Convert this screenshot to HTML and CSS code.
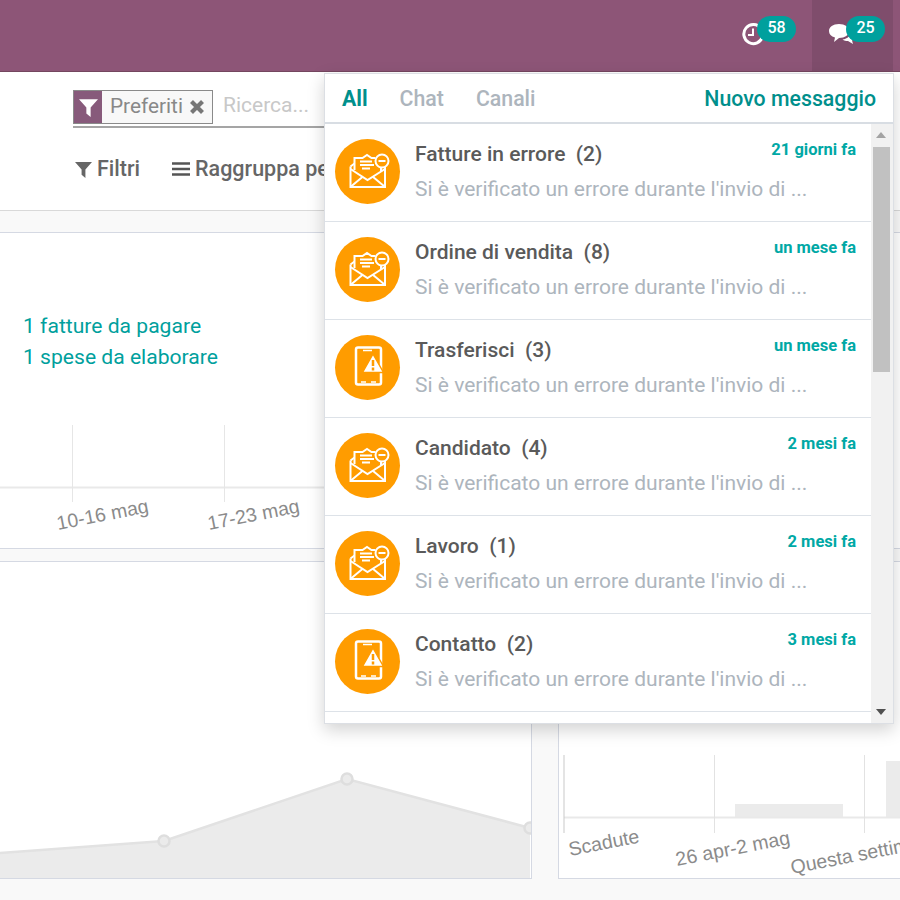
FILE: index.html
```html
<!DOCTYPE html>
<html lang="it">
<head>
    <meta charset="UTF-8">
    <meta name="viewport" content="width=device-width, initial-scale=1.0">
    <title>Messaggi</title>
    <link rel="stylesheet" href="styles.css">
</head>
<body>

<svg class="icon-defs" aria-hidden="true">
    <symbol id="icon-mail" viewBox="0 0 65 65">
        <g fill="none" stroke="#fff" stroke-width="2">
            <path d="M15.500 27.500v20.500h34.500v-20.500"/>
            <path d="M15.500 27.500l4 -3M50 27.500l-4 -3"/>
            <path d="M19.500 31v-12h8l4.500 -3 4.500 3h4"/>
            <path d="M46 29v3"/>
            <path d="M15.500 30l17 11 17.500 -11"/>
            <path d="M16 47.500l12 -10M49.500 47.500l-12 -10"/>
            <path d="M25 22.500h12M25 26h14M27 29.500h8"/>
        </g>
        <circle cx="47" cy="22" r="6.500" fill="#ff9c00" stroke="#fff" stroke-width="2"/>
        <path d="M43.500 22h7" stroke="#fff" stroke-width="2"/>
    </symbol>
    <symbol id="icon-phone" viewBox="0 0 65 65">
        <rect x="21" y="12.500" width="25" height="37" rx="2" fill="none" stroke="#fff" stroke-width="2.500"/>
        <path d="M28 15.500h9M26 47h5M36 47h5" stroke="#fff" stroke-width="1.500"/>
        <path d="M38 19l10.500 18.500h-21z" fill="#fff" stroke="#ff9c00" stroke-width="1.500" stroke-linejoin="round"/>
        <path d="M38 25v6M38 32.500v3" stroke="#ff9c00" stroke-width="2.500"/>
    </symbol>
</svg>

<div class="navbar">
    <div class="nav-item">
        <svg class="nav-icon nav-icon-clock" viewBox="0 0 24 24" width="24" height="24">
            <path d="M20 6.500a9.500 9.500 0 1 0 1.500 8" fill="none" stroke="#fff" stroke-width="3"/>
            <path d="M12 6.500v6.500h-5" fill="none" stroke="#fff" stroke-width="2"/>
        </svg>
        <span class="badge">58</span>
    </div>
    <div class="nav-item nav-item-active">
        <svg class="nav-icon" viewBox="0 0 28 24" width="28" height="24">
            <path d="M11 3c6 0 10 3 10 7s-4 7 -10 7l-5 4 1 -4.500c-4 -1 -6 -3.500 -6 -6.500 0 -4 4 -7 10 -7z" fill="#fff"/>
            <path d="M23 10c3 1 4.500 3 4.500 5 0 2 -1.500 4 -3.500 4.500l1 3.500 -5 -3c-2 0 -4 -.5 -5.500 -1.500 5 -.5 9 -4 8.500 -8.500z" fill="#fff"/>
        </svg>
        <span class="badge">25</span>
    </div>
</div>

<div class="control-panel">
    <div class="search-row">
        <div class="facet">
            <span class="facet-icon">
                <svg viewBox="0 0 16 16" width="19" height="19"><path d="M0 1h16l-6.200 7v8l-3.600 -3v-5z" fill="#fff"/></svg>
            </span>
            <span class="facet-label">Preferiti</span>
            <svg class="facet-close" viewBox="0 0 16 16" width="16" height="16"><path d="M2.500 2.500l11 11M13.500 2.500l-11 11" stroke="#777" stroke-width="4.200"/></svg>
        </div>
        <span class="search-placeholder">Ricerca...</span>
    </div>
    <div class="filter-row">
        <span class="filter-button">
            <svg viewBox="0 0 16 16" width="17" height="17"><path d="M0 1h16l-6.200 7v8l-3.600 -3v-5z" fill="#666"/></svg>
            Filtri
        </span>
        <span class="filter-button">
            <svg viewBox="0 0 18 16" width="18" height="16"><path d="M0 2.500h18M0 8h18M0 13.500h18" stroke="#555" stroke-width="2.600"/></svg>
            Raggruppa per
        </span>
    </div>
</div>

<div class="dashboard">
    <div class="card card-wide">
        <div class="card-links">
            <p>1 fatture da pagare</p>
            <p>1 spese da elaborare</p>
        </div>
        <svg class="chart-top" viewBox="0 420 900 128" width="900" height="128">
            <path d="M0 487.500h330" stroke="#e9e9e9" stroke-width="2"/>
            <path d="M72.500 425v77M224.500 425v77" stroke="#e6e6e6"/>
            <text class="axis-label" transform="translate(58 530) rotate(-11)">10-16 mag</text>
            <text class="axis-label" transform="translate(209 530) rotate(-11)">17-23 mag</text>
        </svg>
    </div>
    <div class="card card-left">
        <svg viewBox="0 562 531 316" width="531" height="316">
            <path d="M0 853L164 841L347 779L530 828V878H0z" fill="#ebebeb"/>
            <path d="M0 853L164 841L347 779L530 828" fill="none" stroke="#e2e2e2" stroke-width="2.500"/>
            <g fill="#ebebeb" stroke="#dedede" stroke-width="2.500">
                <circle cx="164" cy="841" r="5.500"/>
                <circle cx="347" cy="779" r="5.500"/>
                <circle cx="530" cy="828" r="5.500"/>
            </g>
        </svg>
    </div>
    <div class="card card-right">
        <svg viewBox="559 562 400 316" width="400" height="316">
            <path d="M735 804h108v13h-108zM886 761h80v56h-80z" fill="#ebebeb"/>
            <path d="M564 817.500h400" stroke="#e9e9e9" stroke-width="2"/>
            <path d="M564 755v78" stroke="#c9c9c9"/>
            <path d="M714.500 755v78M864.500 755v78" stroke="#e2e2e2"/>
            <text class="axis-label" transform="translate(570 856) rotate(-11)">Scadute</text>
            <text class="axis-label" transform="translate(677 866) rotate(-11)">26 apr-2 mag</text>
            <text class="axis-label" transform="translate(792 874) rotate(-11)">Questa settimana</text>
        </svg>
    </div>
</div>

<!-- messaging menu, open over the page -->
<div class="messaging-menu">
    <div class="menu-tabs">
        <span class="tab tab-active">All</span>
        <span class="tab">Chat</span>
        <span class="tab">Canali</span>
        <span class="new-message">Nuovo messaggio</span>
    </div>
    <div class="menu-body">
        <div class="menu-list">
            <div class="preview">
                <span class="avatar"><svg width="65" height="65"><use href="#icon-mail"/></svg></span>
                <div class="preview-text">
                    <div class="preview-head"><span class="preview-title">Fatture in errore&nbsp; (2)</span><span class="preview-date">21 giorni fa</span></div>
                    <div class="preview-body">Si è verificato un errore durante l'invio di ...</div>
                </div>
            </div>
            <div class="preview">
                <span class="avatar"><svg width="65" height="65"><use href="#icon-mail"/></svg></span>
                <div class="preview-text">
                    <div class="preview-head"><span class="preview-title">Ordine di vendita&nbsp; (8)</span><span class="preview-date">un mese fa</span></div>
                    <div class="preview-body">Si è verificato un errore durante l'invio di ...</div>
                </div>
            </div>
            <div class="preview">
                <span class="avatar"><svg width="65" height="65"><use href="#icon-phone"/></svg></span>
                <div class="preview-text">
                    <div class="preview-head"><span class="preview-title">Trasferisci&nbsp; (3)</span><span class="preview-date">un mese fa</span></div>
                    <div class="preview-body">Si è verificato un errore durante l'invio di ...</div>
                </div>
            </div>
            <div class="preview">
                <span class="avatar"><svg width="65" height="65"><use href="#icon-mail"/></svg></span>
                <div class="preview-text">
                    <div class="preview-head"><span class="preview-title">Candidato&nbsp; (4)</span><span class="preview-date">2 mesi fa</span></div>
                    <div class="preview-body">Si è verificato un errore durante l'invio di ...</div>
                </div>
            </div>
            <div class="preview">
                <span class="avatar"><svg width="65" height="65"><use href="#icon-mail"/></svg></span>
                <div class="preview-text">
                    <div class="preview-head"><span class="preview-title">Lavoro&nbsp; (1)</span><span class="preview-date">2 mesi fa</span></div>
                    <div class="preview-body">Si è verificato un errore durante l'invio di ...</div>
                </div>
            </div>
            <div class="preview">
                <span class="avatar"><svg width="65" height="65"><use href="#icon-phone"/></svg></span>
                <div class="preview-text">
                    <div class="preview-head"><span class="preview-title">Contatto&nbsp; (2)</span><span class="preview-date">3 mesi fa</span></div>
                    <div class="preview-body">Si è verificato un errore durante l'invio di ...</div>
                </div>
            </div>
        </div>
        <div class="scrollbar">
            <span class="arrow-up"></span>
            <div class="scroll-track"><div class="scroll-thumb"></div></div>
            <span class="arrow-down"></span>
        </div>
    </div>
</div>

</body>
</html>
```

FILE: styles.css
```css
body {
    position: relative;
    width: 900px;
    height: 900px;
    margin: 0;
    overflow: hidden;
    background-color: #f9f9f9;
    color: #555;
    font-family: Roboto, sans-serif;
}

.icon-defs {
    display: none;
}

/* top bar */
.navbar {
    display: flex;
    justify-content: flex-end;
    height: 71px;
    padding-right: 7px;
    background-color: #8d5577;
    border-bottom: 1px solid #74465f;
}

.nav-item {
    display: flex;
    align-items: flex-start;
    padding: 16px 8px 0 0;
    width: 73px;
    justify-content: flex-end;
}

.nav-item-active {
    width: 73px;
    padding-right: 8px;
    margin-left: 8px;
    background-color: #7f4d6c;
}

.nav-icon {
    margin: 5px -10px 0 0;
}

.nav-icon-clock {
    margin: 6px -8px 0 0;
}

.badge {
    position: relative;
    width: 39px;
    height: 26px;
    border-radius: 13px;
    background-color: #00a09d;
    color: #fff;
    font-size: 16px;
    font-weight: 500;
    line-height: 24px;
    text-align: center;
}

/* search and filters */
.control-panel {
    height: 138px;
    padding-left: 73px;
    background-color: #fff;
    border-bottom: 1px solid #d9d9d9;
}

.search-row {
    display: flex;
    align-items: flex-start;
    gap: 9px;
    height: 36px;
    margin-top: 0;
    padding-top: 18px;
    border-bottom: 2px solid #a5a5a5;
    width: 300px;
    font-size: 20.800px;
}

.facet {
    display: flex;
    align-items: center;
    gap: 6px;
    height: 32px;
    border: 1px solid #8a8a8a;
    background-color: #f8f8f8;
    color: #888;
    padding-right: 7px;
}

.facet-icon {
    display: flex;
    align-items: center;
    justify-content: center;
    width: 28px;
    height: 32px;
    background-color: #875a7b;
}

.facet-label {
    margin-left: 2px;
    padding-bottom: 2px;
}

.search-placeholder {
    margin-left: 1px;
    color: #c8c8c8;
    font-size: 21px;
    line-height: 30px;
}

.filter-row {
    display: flex;
    gap: 32px;
    margin-top: 28px;
    padding-left: 2px;
    font-size: 21.500px;
    font-weight: 500;
    color: #666;
}

.filter-button {
    display: flex;
    align-items: center;
    gap: 5px;
    line-height: 26px;
    white-space: nowrap;
}

/* cards behind the menu */
.dashboard {
    display: grid;
    grid-template-columns: 533px 400px;
    grid-template-rows: 317px 318px;
    column-gap: 26px;
    row-gap: 12px;
    margin-left: -1px;
    padding-top: 21px;
}

.card {
    background-color: #fff;
    border: 1px solid #d5d9e3;
    overflow: hidden;
}

.card svg {
    display: block;
}

.card-wide {
    grid-column: 1 / 3;
    width: 960px;
}

.card-links {
    height: 187px;
    padding: 77px 0 0 23px;
    box-sizing: border-box;
    color: #00a09d;
    font-size: 21.100px;
    line-height: 31px;
}

.card-links p {
    margin: 0;
}

.axis-label {
    fill: #8b8b8b;
    font-family: "Liberation Sans", sans-serif;
    font-size: 19.500px;
}

/* messaging menu */
.messaging-menu {
    position: absolute;
    top: 73px;
    left: 324px;
    width: 568px;
    background-color: #fff;
    border: 1px solid #dcdfe4;
    box-shadow: 0 6px 16px rgba(0, 0, 0, 0.175);
}

.menu-tabs {
    display: flex;
    align-items: center;
    gap: 32px;
    height: 48px;
    padding: 0 17px 0 17px;
    border-bottom: 2px solid #d8dde3;
    font-size: 21.300px;
    font-weight: 500;
    color: #adb5bd;
}

.tab-active {
    color: #008f8c;
    font-weight: 700;
}

.new-message {
    margin-left: auto;
    color: #008f8c;
}

.menu-body {
    display: flex;
    height: 599px;
}

.menu-list {
    flex: 1;
    overflow: hidden;
}

.preview {
    display: flex;
    height: 97px;
    padding: 0 15px 0 10px;
    border-bottom: 1px solid #dde2e8;
}

.avatar {
    flex: none;
    width: 65px;
    height: 65px;
    margin: 15px 15px 0 0;
    border-radius: 50%;
    background-color: #ff9c00;
}

.preview-text {
    flex: 1;
    padding-top: 16px;
}

.preview-head {
    display: flex;
    justify-content: space-between;
    align-items: flex-start;
}

.preview-title {
    font-size: 21px;
    font-weight: 500;
    line-height: 28px;
    color: #5a5a5a;
}

.preview-date {
    margin-top: 1px;
    font-size: 16.500px;
    font-weight: 700;
    line-height: 18px;
    color: #00a8a5;
}

.preview-body {
    margin-top: 8px;
    font-size: 21px;
    line-height: 26px;
    color: #adb5bd;
    white-space: nowrap;
}

.scrollbar {
    display: flex;
    flex: none;
    flex-direction: column;
    align-items: center;
    width: 22px;
    background-color: #f1f1f1;
}

.scroll-track {
    flex: 1;
    align-self: stretch;
    padding: 1px 3px 0 2px;
}

.scroll-thumb {
    height: 225px;
    background-color: #c1c1c1;
}

.arrow-up,
.arrow-down {
    flex: none;
    margin: 8px 2px 8px 0;
    border-left: 5px solid transparent;
    border-right: 5px solid transparent;
}

.arrow-up {
    border-bottom: 6px solid #a3a3a3;
}

.arrow-down {
    border-top: 6px solid #505050;
}
```
